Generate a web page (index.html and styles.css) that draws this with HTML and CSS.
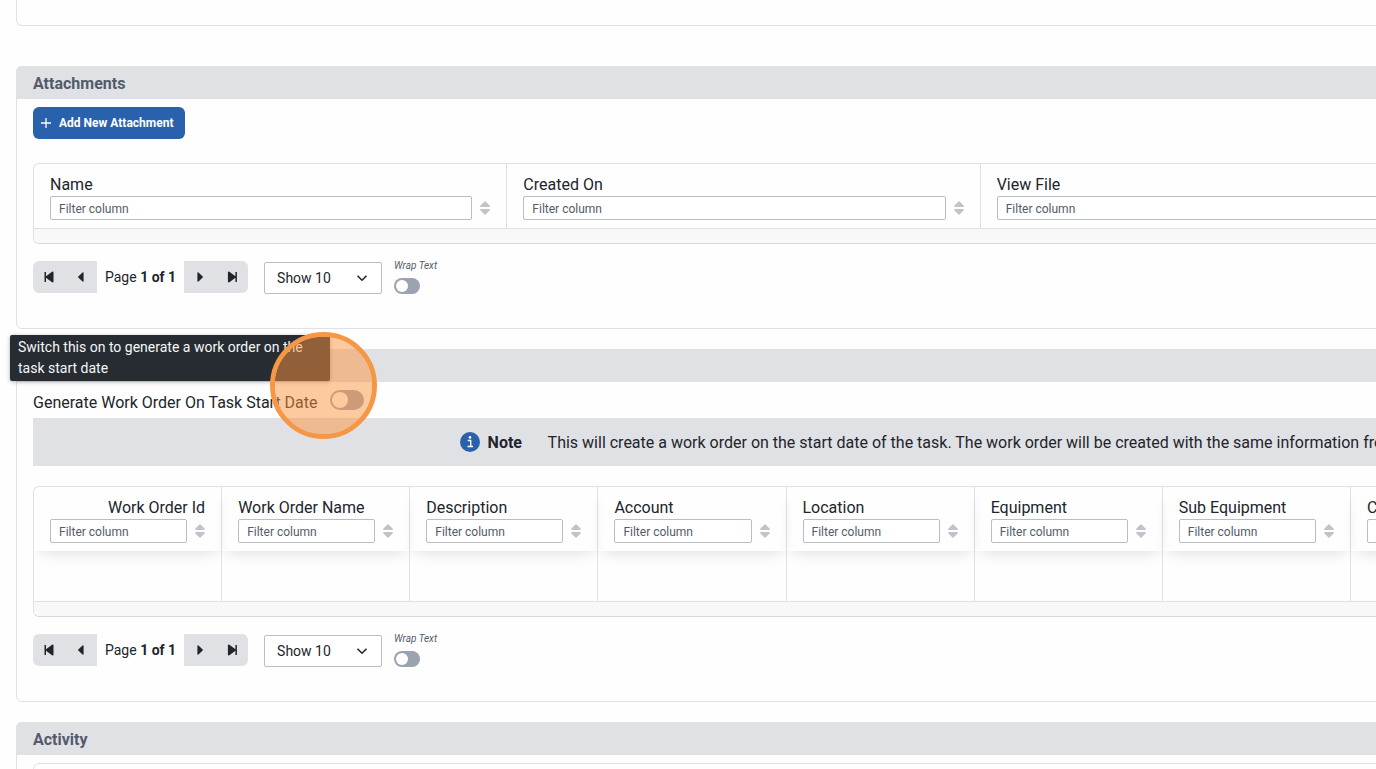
FILE: index.html
```html
<!DOCTYPE html>
<html lang="en">
<head>
    <meta charset="utf-8">
    <title>Task</title>
    <meta name="viewport" content="width=device-width, initial-scale=1.0">
    <link rel="stylesheet" href="styles.css">
</head>
<body>
    <!-- Shared icons -->
    <svg class="icon-defs" aria-hidden="true">
        <symbol id="icon-sort" viewBox="0 0 10 14">
            <path d="M5 0 L9.6 4.6 Q10.3 6 9 6 H1 Q-0.3 6 0.4 4.6 Z M5 14 L9.6 9.4 Q10.3 8 9 8 H1 Q-0.3 8 0.4 9.4 Z"/>
        </symbol>
        <symbol id="icon-first" viewBox="0 0 16 16">
            <path d="M3.5 3 H5 V7.3 L11 2.7 Q12.5 2.2 12.5 3.4 V12.6 Q12.5 13.8 11 13.3 L5 8.7 V13 H3.5 Z"/>
        </symbol>
        <symbol id="icon-prev" viewBox="0 0 16 16">
            <path d="M5.3 8.5 Q4.7 8 5.3 7.5 L9.5 3.4 Q10.6 2.8 10.6 4 V12 Q10.6 13.2 9.5 12.6 Z"/>
        </symbol>
        <symbol id="icon-next" viewBox="0 0 16 16">
            <path d="M10.7 8.5 Q11.3 8 10.7 7.5 L6.5 3.4 Q5.4 2.8 5.4 4 V12 Q5.4 13.2 6.5 12.6 Z"/>
        </symbol>
        <symbol id="icon-last" viewBox="0 0 16 16">
            <path d="M12.9 3 H11.4 V7.3 L5.4 2.7 Q3.9 2.2 3.9 3.4 V12.6 Q3.9 13.8 5.4 13.3 L11.4 8.7 V13 H12.9 Z"/>
        </symbol>
        <symbol id="icon-chevron" viewBox="0 0 12 12">
            <path d="M1.5 3.7 L6 8.2 L10.5 3.7" fill="none" stroke="currentColor" stroke-width="1.6"/>
        </symbol>
    </svg>

    <main class="page">
        <section class="panel panel-previous"></section>

        <!-- Attachments -->
        <section class="panel">
            <h2 class="panel-title">Attachments</h2>
            <div class="panel-body">
                <button class="add-button" type="button">
                    <svg width="10" height="10" viewBox="0 0 10 10" aria-hidden="true"><path d="M5 0 V10 M0 5 H10" stroke="currentColor" stroke-width="1.3"/></svg>
                    Add New Attachment
                </button>

                <div class="grid-box">
                    <table class="grid">
                        <thead>
                            <tr>
                                <th><label for="att-name">Name</label><div class="filter"><input id="att-name" type="text" placeholder="Filter column"><button class="sort" type="button" aria-label="Sort by name"><svg><use href="#icon-sort"/></svg></button></div></th>
                                <th><label for="att-created">Created On</label><div class="filter"><input id="att-created" type="text" placeholder="Filter column"><button class="sort" type="button" aria-label="Sort by created on"><svg><use href="#icon-sort"/></svg></button></div></th>
                                <th><label for="att-view">View File</label><div class="filter"><input id="att-view" type="text" placeholder="Filter column"><button class="sort" type="button" aria-label="Sort by view file"><svg><use href="#icon-sort"/></svg></button></div></th>
                            </tr>
                        </thead>
                    </table>
                    <div class="scroll-track"></div>
                </div>

                <div class="pager">
                    <div class="pager-nav">
                        <button type="button" aria-label="First page"><svg><use href="#icon-first"/></svg></button>
                        <button type="button" aria-label="Previous page"><svg><use href="#icon-prev"/></svg></button>
                        <span class="pager-text">Page <b>1 of 1</b></span>
                        <button type="button" aria-label="Next page"><svg><use href="#icon-next"/></svg></button>
                        <button type="button" aria-label="Last page"><svg><use href="#icon-last"/></svg></button>
                    </div>
                    <div class="page-size">
                        <select aria-label="Rows per page">
                            <option>Show 10</option>
                            <option>Show 20</option>
                        </select>
                        <svg><use href="#icon-chevron"/></svg>
                    </div>
                    <div class="wrap-text">
                        <label for="att-wrap">Wrap Text</label>
                        <input class="switch" id="att-wrap" type="checkbox">
                    </div>
                </div>
            </div>
        </section>

        <!-- Work orders -->
        <section class="panel">
            <div class="panel-title"></div>
            <div class="panel-body">
                <div class="generate">
                    <label for="generate">Generate Work Order On Task Start Date</label>
                    <div class="generate-switch">
                        <input class="switch switch-large" id="generate" type="checkbox" aria-describedby="generate-tip">
                        <span class="click-marker"></span>
                    </div>
                    <div class="tooltip" id="generate-tip" role="tooltip">Switch this on to generate a work order on the task start date</div>
                </div>

                <div class="note">
                    <svg class="note-icon" viewBox="0 0 20 20" aria-hidden="true">
                        <circle cx="10" cy="10" r="10" fill="#2961ad"/>
                        <circle cx="10" cy="5.4" r="1.3" fill="#fff"/>
                        <path d="M7.8 8.5 H10.7 V14.3 M7.5 14.5 H13" fill="none" stroke="#fff" stroke-width="1.4"/>
                    </svg>
                    <b>Note</b>
                    <span class="note-text">This will create a work order on the start date of the task. The work order will be created with the same information from the task.</span>
                </div>

                <div class="grid-box">
                    <table class="grid grid-orders">
                        <thead>
                            <tr>
                                <th class="number"><label for="wo-id">Work Order Id</label><div class="filter"><input id="wo-id" type="text" placeholder="Filter column"><button class="sort" type="button" aria-label="Sort by work order id"><svg><use href="#icon-sort"/></svg></button></div></th>
                                <th><label for="wo-name">Work Order Name</label><div class="filter"><input id="wo-name" type="text" placeholder="Filter column"><button class="sort" type="button" aria-label="Sort by work order name"><svg><use href="#icon-sort"/></svg></button></div></th>
                                <th><label for="wo-desc">Description</label><div class="filter"><input id="wo-desc" type="text" placeholder="Filter column"><button class="sort" type="button" aria-label="Sort by description"><svg><use href="#icon-sort"/></svg></button></div></th>
                                <th><label for="wo-account">Account</label><div class="filter"><input id="wo-account" type="text" placeholder="Filter column"><button class="sort" type="button" aria-label="Sort by account"><svg><use href="#icon-sort"/></svg></button></div></th>
                                <th><label for="wo-location">Location</label><div class="filter"><input id="wo-location" type="text" placeholder="Filter column"><button class="sort" type="button" aria-label="Sort by location"><svg><use href="#icon-sort"/></svg></button></div></th>
                                <th><label for="wo-equipment">Equipment</label><div class="filter"><input id="wo-equipment" type="text" placeholder="Filter column"><button class="sort" type="button" aria-label="Sort by equipment"><svg><use href="#icon-sort"/></svg></button></div></th>
                                <th><label for="wo-sub">Sub Equipment</label><div class="filter"><input id="wo-sub" type="text" placeholder="Filter column"><button class="sort" type="button" aria-label="Sort by sub equipment"><svg><use href="#icon-sort"/></svg></button></div></th>
                                <th><label for="wo-created">Created On</label><div class="filter"><input id="wo-created" type="text" placeholder="Filter column"><button class="sort" type="button" aria-label="Sort by created on"><svg><use href="#icon-sort"/></svg></button></div></th>
                            </tr>
                        </thead>
                        <tbody>
                            <tr><td></td><td></td><td></td><td></td><td></td><td></td><td></td><td></td></tr>
                        </tbody>
                    </table>
                    <div class="scroll-track"></div>
                </div>

                <div class="pager">
                    <div class="pager-nav">
                        <button type="button" aria-label="First page"><svg><use href="#icon-first"/></svg></button>
                        <button type="button" aria-label="Previous page"><svg><use href="#icon-prev"/></svg></button>
                        <span class="pager-text">Page <b>1 of 1</b></span>
                        <button type="button" aria-label="Next page"><svg><use href="#icon-next"/></svg></button>
                        <button type="button" aria-label="Last page"><svg><use href="#icon-last"/></svg></button>
                    </div>
                    <div class="page-size">
                        <select aria-label="Rows per page">
                            <option>Show 10</option>
                            <option>Show 20</option>
                        </select>
                        <svg><use href="#icon-chevron"/></svg>
                    </div>
                    <div class="wrap-text">
                        <label for="wo-wrap">Wrap Text</label>
                        <input class="switch" id="wo-wrap" type="checkbox">
                    </div>
                </div>
            </div>
        </section>

        <!-- Activity -->
        <section class="panel">
            <h2 class="panel-title">Activity</h2>
            <div class="panel-body">
                <div class="activity-box"></div>
            </div>
        </section>
    </main>
</body>
</html>
```
FILE: styles.css
```css
* {
    box-sizing: border-box;
}

body {
    margin: 0;
    height: 100vh;
    overflow: hidden;
    background: #fefefe;
    color: #21252b;
    font-family: Roboto, "Liberation Sans", sans-serif;
    font-size: 16px;
    line-height: 24px;
}

button, input, select {
    font-family: inherit;
    color: inherit;
}

button {
    border: 0;
    padding: 0;
    cursor: pointer;
}

svg {
    display: block;
    fill: currentColor;
}

.icon-defs {
    display: none;
}

/* The page runs past the right edge of the window */
.page {
    width: calc(100% + 112px);
    padding: 0 16px;
}

.panel {
    margin-bottom: 20px;
    border: 1px solid #e0e1e5;
    border-radius: 6px;
}

.panel-previous {
    height: 26px;
    margin-bottom: 40px;
    border-top: 0;
    border-top-left-radius: 0;
}

.panel-title {
    min-height: 33px;
    margin: -1px -1px 0;
    padding: 6px 17px 3px;
    background: #e0e1e5;
    border-radius: 6px 6px 0 0;
    color: #535b6b;
    font-size: 16px;
    font-weight: 700;
    line-height: 24px;
}

.panel-body {
    padding: 8px 16px 34px;
}

.add-button {
    display: flex;
    align-items: center;
    gap: 8px;
    min-width: 152px;
    height: 32px;
    margin-bottom: 24px;
    padding: 0 8px;
    background: #2961ad;
    border-radius: 6px;
    color: #fff;
    font-size: 12px;
    font-weight: 700;
}

/* Tables */
.grid-box {
    overflow: hidden;
    border: 1px solid #e0e1e5;
    border-bottom-color: #d8d9dc;
    border-radius: 6px;
}

.grid {
    width: 100%;
    table-layout: fixed;
    border-collapse: separate;
    border-spacing: 0;
}

.grid th {
    padding: 9px 16px 8px;
    border-right: 1px solid #e0e1e5;
    font-weight: 400;
    text-align: left;
}

.grid th.number {
    text-align: right;
}

.grid label {
    display: block;
    line-height: 23px;
}

.grid-orders {
    width: 1505px;
}

.grid-orders th {
    box-shadow: 0 8px 14px -6px rgba(0, 0, 0, 0.13);
}

.grid-orders td {
    height: 50px;
    border-right: 1px solid #e0e1e5;
}

.filter {
    display: flex;
    align-items: center;
    gap: 8px;
}

.filter input {
    flex: 1;
    min-width: 0;
    height: 24px;
    padding: 2px 8px 0;
    background: #fff;
    border: 1px solid #b9bdc4;
    border-radius: 2px;
    font-size: 12px;
}

.filter input::placeholder {
    color: #535b6b;
    opacity: 1;
}

.sort {
    background: none;
    color: #c0c3c9;
}

.sort svg {
    width: 10px;
    height: 14px;
}

.scroll-track {
    height: 15px;
    background: #f8f8f8;
    border-top: 1px solid #e0e1e5;
}

/* Paging */
.pager {
    display: flex;
    align-items: flex-end;
    height: 33px;
    margin-top: 17px;
}

.pager-nav {
    display: flex;
    align-self: flex-start;
    margin-right: 16px;
    overflow: hidden;
    border-radius: 6px;
    font-size: 14px;
    line-height: 32px;
}

.pager-nav button {
    display: flex;
    align-items: center;
    justify-content: center;
    width: 32px;
    height: 32px;
    background: #e0e1e5;
}

.pager-nav svg {
    width: 16px;
    height: 16px;
}

.pager-text {
    padding: 0 8px;
}

.page-size {
    position: relative;
    margin-right: 12px;
}

.page-size select {
    display: block;
    width: 118px;
    height: 32px;
    padding: 0 12px;
    appearance: none;
    background: #fff;
    border: 1px solid #b9bdc4;
    border-radius: 2px;
    font-size: 14px;
}

.page-size svg {
    position: absolute;
    top: 10px;
    right: 14px;
    width: 12px;
    height: 12px;
    pointer-events: none;
}

.wrap-text {
    display: flex;
    flex-direction: column;
    gap: 6px;
    color: #535b6b;
    font-size: 10px;
    font-style: italic;
    line-height: 12px;
}

/* Switches */
.switch {
    display: block;
    width: 26px;
    height: 16px;
    margin: 0;
    padding: 2px;
    appearance: none;
    background: #9ca3b0;
    border-radius: 10px;
    cursor: pointer;
}

.switch::before {
    content: "";
    display: block;
    width: 12px;
    height: 12px;
    background: #fff;
    border-radius: 50%;
}

.switch:checked::before {
    margin-left: auto;
}

.switch-large {
    width: 34px;
    height: 20px;
}

.switch-large::before {
    width: 16px;
    height: 16px;
}

.generate {
    position: relative;
    display: flex;
    gap: 8px;
    height: 28px;
}

.generate label {
    min-width: 289px;
    padding-top: 1px;
}

.generate-switch {
    position: relative;
}

.tooltip {
    position: absolute;
    top: -55px;
    left: -23px;
    width: 320px;
    padding: 2px 8px;
    background: #272c33;
    border-radius: 2px;
    box-shadow: 0 1px 4px rgba(0, 0, 0, 0.3);
    color: #f5f6f7;
    font-size: 14px;
    line-height: 21px;
}

.click-marker {
    position: absolute;
    z-index: 1;
    top: -58px;
    left: -60px;
    width: 107px;
    height: 107px;
    background: rgba(252, 148, 62, 0.5);
    background-clip: padding-box;
    border: 5px solid #f69745;
    border-radius: 50%;
    pointer-events: none;
}

.note {
    display: flex;
    align-items: center;
    gap: 8px;
    height: 48px;
    margin-bottom: 20px;
    padding-left: 30%;
    overflow: hidden;
    background: #e0e1e5;
    line-height: 26px;
    white-space: nowrap;
}

.note b {
    min-width: 36px;
    padding-top: 2px;
}

.note-icon {
    flex: none;
    width: 20px;
    height: 20px;
}

.note-text {
    padding: 2px 0 0 16px;
}

.activity-box {
    height: 64px;
    border: 1px solid #e0e1e5;
    border-radius: 6px;
}
```
